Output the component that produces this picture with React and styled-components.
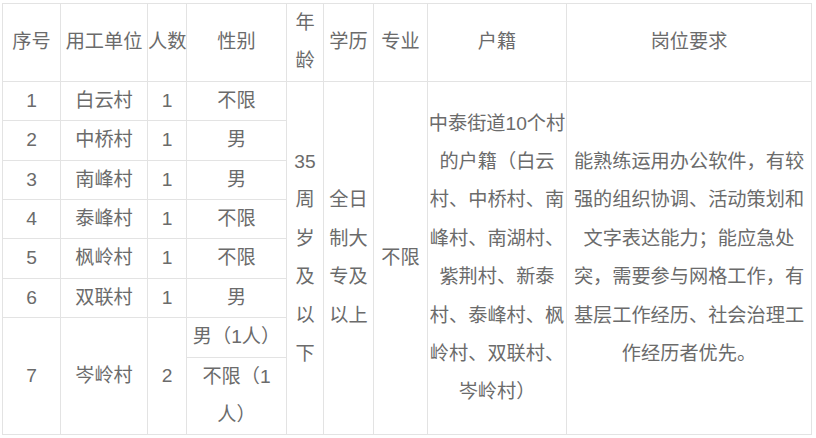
import React from 'react';
import styled, {createGlobalStyle} from 'styled-components';

const GlobalStyle = createGlobalStyle`
  html, body {
    margin: 0;
    padding: 0;
    background: #ffffff;
  }
  body {
    padding: 3px 0 0 2px;
  }
`;

const columns = [58, 87, 39, 100, 37, 50, 54, 139, 245];

const villages = [
  {id: 1, name: '白云村', count: 1, gender: '不限'},
  {id: 2, name: '中桥村', count: 1, gender: '男'},
  {id: 3, name: '南峰村', count: 1, gender: '男'},
  {id: 4, name: '泰峰村', count: 1, gender: '不限'},
  {id: 5, name: '枫岭村', count: 1, gender: '不限'},
  {id: 6, name: '双联村', count: 1, gender: '男'},
];

const ageLines = ['35', '周', '岁', '及', '以', '下'];
const eduLines = ['全日', '制大', '专及', '以上'];
const hukouLines = [
  '中泰街道10个村',
  '的户籍（白云',
  '村、中桥村、南',
  '峰村、南湖村、',
  '紫荆村、新泰',
  '村、泰峰村、枫',
  '岭村、双联村、',
  '岑岭村）',
];
const jobLines = [
  '能熟练运用办公软件，有较',
  '强的组织协调、活动策划和',
  '文字表达能力；能应急处',
  '突，需要参与网格工作，有',
  '基层工作经历、社会治理工',
  '作经历者优先。',
];

const Lines = ({lines}) => (
  <>
    {lines.map((line, i) => (
      <Line key={i}>{line}</Line>
    ))}
  </>
);

const App = () => {
  return (
    <>
      <GlobalStyle />
      <Table>
        <colgroup>
          {columns.map((w, i) => (
            <col key={i} style={{width: w}} />
          ))}
        </colgroup>
        <thead>
          <tr>
            <Head>序号</Head>
            <Head>用工单位</Head>
            <Head>人数</Head>
            <Head>性别</Head>
            <Head><Lines lines={['年', '龄']} /></Head>
            <Head>学历</Head>
            <Head>专业</Head>
            <Head>户籍</Head>
            <Head>岗位要求</Head>
          </tr>
        </thead>
        <tbody>
          {villages.map((v, i) => (
            <tr key={v.id}>
              <Cell>{v.id}</Cell>
              <Cell>{v.name}</Cell>
              <Cell>{v.count}</Cell>
              <Cell>{v.gender}</Cell>
              {i === 0 && (
                <>
                  <Cell rowSpan={8}><Lines lines={ageLines} /></Cell>
                  <Cell rowSpan={8}><Lines lines={eduLines} /></Cell>
                  <Cell rowSpan={8}>不限</Cell>
                  <Cell rowSpan={8}><Lines lines={hukouLines} /></Cell>
                  <Cell rowSpan={8}><Lines lines={jobLines} /></Cell>
                </>
              )}
            </tr>
          ))}
          <tr>
            <Cell rowSpan={2}>7</Cell>
            <Cell rowSpan={2}>岑岭村</Cell>
            <Cell rowSpan={2}>2</Cell>
            <Cell>男（1人）</Cell>
          </tr>
          <tr>
            <Cell><Lines lines={['不限（1', '人）']} /></Cell>
          </tr>
        </tbody>
      </Table>
    </>
  );
};

const Table = styled.table`
  width: 810px;
  table-layout: fixed;
  border-collapse: collapse;
  font-family: "Liberation Sans", "Noto Sans CJK SC", sans-serif;
  font-size: 19.2px;
  line-height: 38.4px;
  color: #6b6b6b;
`;

const Cell = styled.td`
  border: 1px solid #e3e3e3;
  padding: 0;
  text-align: center;
  vertical-align: middle;
  white-space: nowrap;
  overflow: visible;
`;

const Head = styled(Cell).attrs({as: 'th'})`
  font-weight: normal;
`;

const Line = styled.div`
  white-space: nowrap;
`;

export default App;
